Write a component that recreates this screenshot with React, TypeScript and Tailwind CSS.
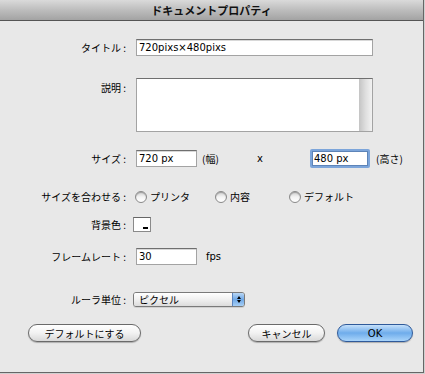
import React from "react";

const jp = { fontFamily: '"Noto Sans CJK JP", "Noto Sans", sans-serif' };
const lat = { fontFamily: '"DejaVu Sans", "Noto Sans CJK JP", sans-serif' };

function Label({ children, top }: { children: React.ReactNode; top?: boolean }) {
  return (
    <div
      className={`w-[130px] shrink-0 pr-[4px] text-right text-[10px] leading-[12px] text-black ${top ? "pt-[4px]" : ""}`}
      style={jp}
    >
      {children}
    </div>
  );
}

function Field({ value, w }: { value: string; w: string }) {
  return (
    <div
      className={`${w} h-[17px] bg-white border border-[#a3a3a3] border-t-[#6f6f6f] shadow-[inset_0_1px_0_#d8d8d8] flex items-center pl-[2px] text-[10px] text-black`}
      style={lat}
    >
      {value}
    </div>
  );
}

function Radio({ label, w }: { label: string; w: string }) {
  return (
    <div className={`${w} flex items-center`}>
      <div className="w-[12px] h-[12px] rounded-full border border-[#8a8a8a] bg-gradient-to-b from-[#cfcfcf] via-[#f4f4f4] to-white shadow-[inset_0_1px_1px_rgba(0,0,0,0.25)]" />
      <span className="ml-[3px] text-[10px] leading-[12px] text-black" style={jp}>
        {label}
      </span>
    </div>
  );
}

function PillButton({ children, w, blue }: { children: React.ReactNode; w: string; blue?: boolean }) {
  return (
    <div
      className={`${w} h-[18px] rounded-full border flex items-center justify-center text-[10px] text-black ${
        blue
          ? "border-[#2f5a9a] bg-gradient-to-b from-[#c5e0fa] via-[#6eaceb] to-[#a9d4fa]"
          : "border-[#6a6a6a] bg-gradient-to-b from-white via-[#f2f2f2] to-[#d9d9d9]"
      } shadow-[0_1px_1px_rgba(0,0,0,0.25)]`}
      style={jp}
    >
      {children}
    </div>
  );
}

export default function App() {
  return (
    <div className="w-[425px] h-[374px] bg-[#d0d0d0]">
      <div className="w-[424px] h-[373px] bg-[#e8e8e8] border-r border-b border-[#666] flex flex-col">
        <div
          className="h-[21px] shrink-0 border-b border-[#555] bg-gradient-to-b from-[#dadada] via-[#bdbdbd] to-[#a3a3a3] flex items-center justify-center text-[11px] font-bold text-[#111]"
          style={jp}
        >
          ドキュメントプロパティ
        </div>

        {/* Title */}
        <div className="mt-[18px] flex items-center">
          <Label>タイトル :</Label>
          <div className="ml-[6px]">
            <Field value="720pixs×480pixs" w="w-[237px]" />
          </div>
        </div>

        {/* Description */}
        <div className="mt-[22px] flex items-start">
          <Label top>説明 :</Label>
          <div className="ml-[6px] w-[237px] h-[54px] bg-white border border-[#a3a3a3] border-t-[#6f6f6f] flex justify-end">
            <div className="w-[13px] h-full bg-gradient-to-r from-[#c4c4c4] via-[#dedede] to-[#f2f2f2]" />
          </div>
        </div>

        {/* Size */}
        <div className="mt-[18px] flex items-center h-[17px]">
          <Label>サイズ :</Label>
          <div className="ml-[6px] flex items-center">
            <Field value="720 px" w="w-[61px]" />
            <span className="w-[60px] pl-[5px] text-[10px]" style={jp}>
              (幅)
            </span>
            <span className="w-[53px] text-[10px]" style={lat}>
              x
            </span>
            <div className="w-[60px] h-[19px] rounded-[2px] border-2 border-[#7ca5da] flex items-center -my-[1px]">
              <div
                className="w-full h-full bg-white border border-[#5d84b8] flex items-center pl-[1px] text-[10px] text-black"
                style={lat}
              >
                480 px
              </div>
            </div>
            <span className="pl-[6px] text-[10px]" style={jp}>
              (高さ)
            </span>
          </div>
        </div>

        {/* Fit size */}
        <div className="mt-[24px] flex items-center h-[12px]">
          <Label>サイズを合わせる :</Label>
          <div className="ml-[5px] flex items-center">
            <Radio label="プリンタ" w="w-[80px]" />
            <Radio label="内容" w="w-[74px]" />
            <Radio label="デフォルト" w="w-[80px]" />
          </div>
        </div>

        {/* Background */}
        <div className="mt-[14px] flex items-center h-[15px]">
          <Label>背景色 :</Label>
          <div className="ml-[3px] w-[18px] h-[15px] bg-white border border-[#8a8a8a] border-t-[#666] relative">
            <div className="absolute right-[2px] bottom-[2px] w-[5px] h-[2px] bg-black" />
          </div>
        </div>

        {/* Frame rate */}
        <div className="mt-[16px] flex items-center h-[17px]">
          <Label>フレームレート :</Label>
          <div className="ml-[6px] flex items-center">
            <Field value="30" w="w-[61px]" />
            <span className="ml-[9px] text-[10px]" style={lat}>
              fps
            </span>
          </div>
        </div>

        {/* Ruler */}
        <div className="mt-[27px] flex items-center h-[15px]">
          <Label>ルーラ単位 :</Label>
          <div className="ml-[3px] w-[112px] h-[15px] rounded-[3px] border border-[#7a7a7a] flex overflow-hidden shadow-[0_1px_0_rgba(0,0,0,0.1)]">
            <div
              className="flex-1 bg-gradient-to-b from-white via-[#f0f0f0] to-[#dcdcdc] text-[10px] leading-[13px] pl-[5px] text-black"
              style={jp}
            >
              ピクセル
            </div>
            <div className="w-[12px] bg-gradient-to-b from-[#b9d7f5] via-[#6fa8e6] to-[#a7cff5] border-l border-[#5a83bd] flex flex-col items-center justify-center gap-[1px]">
              <div className="w-0 h-0 border-l-[2px] border-r-[2px] border-b-[3px] border-l-transparent border-r-transparent border-b-black" />
              <div className="w-0 h-0 border-l-[2px] border-r-[2px] border-t-[3px] border-l-transparent border-r-transparent border-t-black" />
            </div>
          </div>
        </div>

        {/* Buttons */}
        <div className="mt-[17px] flex items-center">
          <div className="ml-[28px]">
            <PillButton w="w-[113px]">デフォルトにする</PillButton>
          </div>
          <div className="ml-[107px]">
            <PillButton w="w-[77px]">キャンセル</PillButton>
          </div>
          <div className="ml-[12px]">
            <PillButton w="w-[76px]" blue>
              <span style={lat}>OK</span>
            </PillButton>
          </div>
        </div>
      </div>
    </div>
  );
}
